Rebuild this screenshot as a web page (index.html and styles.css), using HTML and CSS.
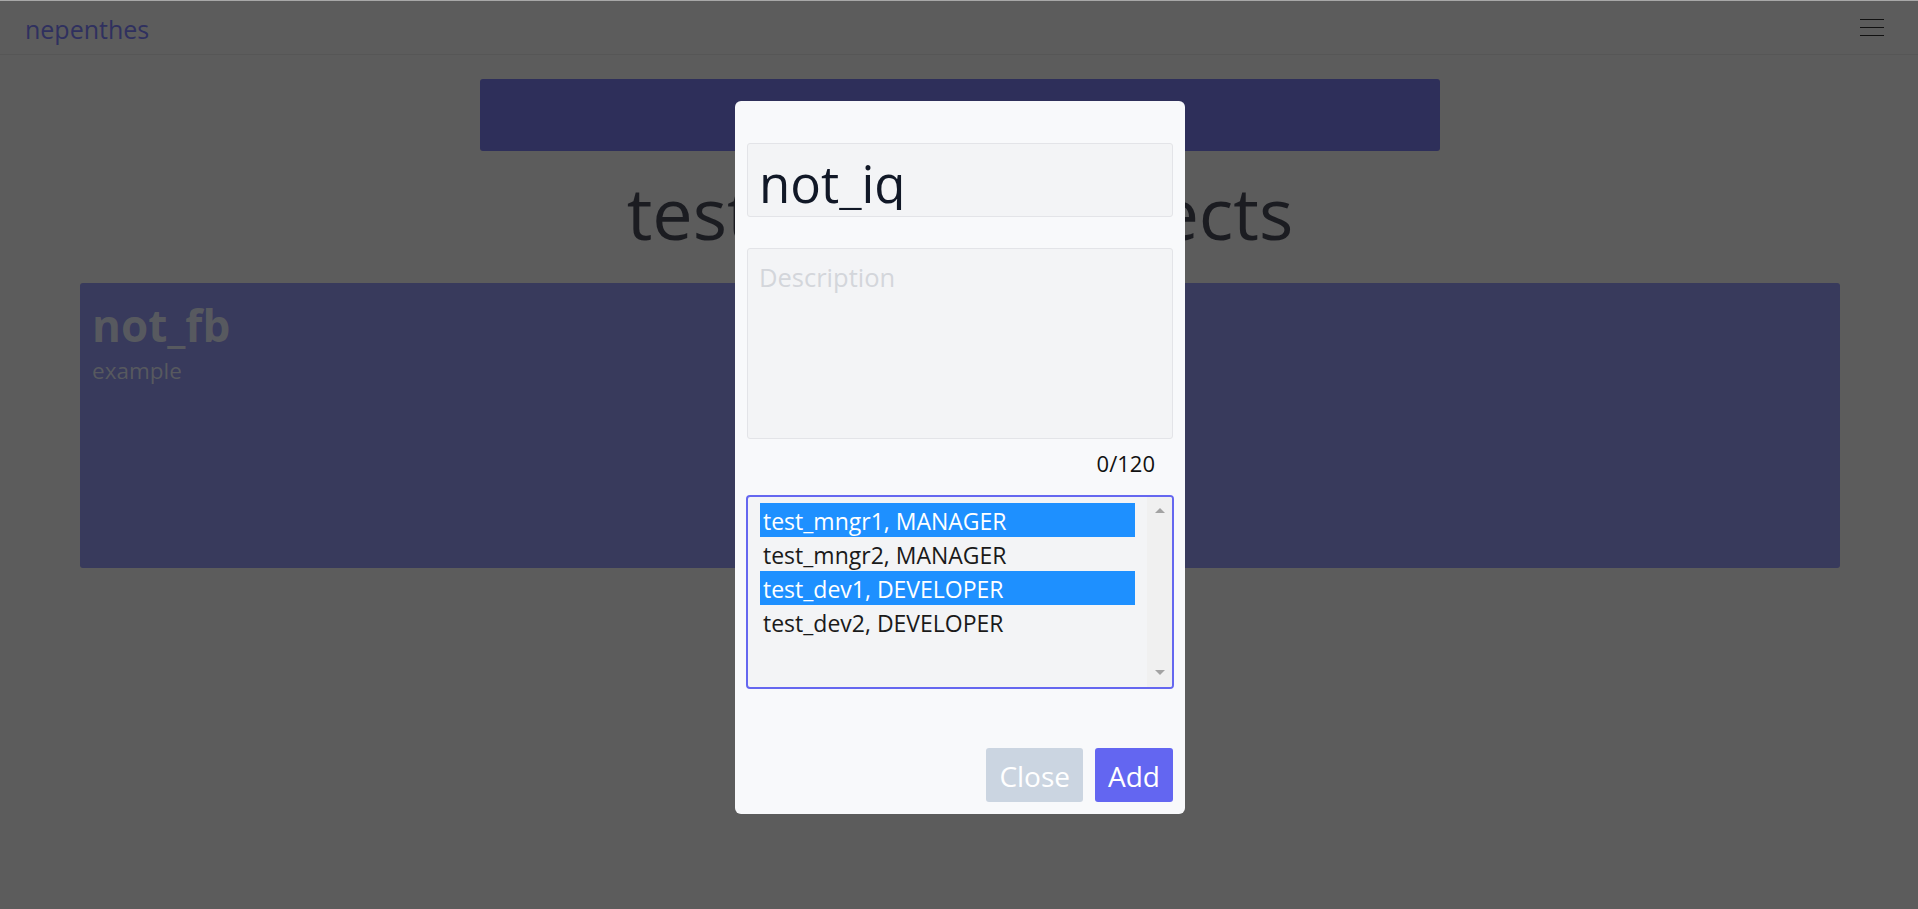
FILE: index.html
```html
<!DOCTYPE html>
<html lang="en">
<head>
<meta charset="utf-8">
<title>nepenthes</title>
<link rel="stylesheet" href="styles.css">
</head>
<body>
<header class="nav">
  <a class="brand" href="#">nepenthes</a>
  <button class="burger" aria-label="Menu">
    <svg width="24" height="18" viewBox="0 0 24 18"><path d="M0 0.5H24M0 8.5H24M0 16.5H24" stroke="#111" stroke-width="1.2" fill="none"/></svg>
  </button>
</header>
<main class="page">
  <div class="banner"></div>
  <h1 class="title">test_mngr1 projects</h1>
  <section class="card">
    <h2 class="card-name">not_fb</h2>
    <p class="card-desc">example</p>
  </section>
</main>

<div class="modal" role="dialog">
  <label class="name-field">
    <span class="name-clip"><input class="name-input" type="text" value="not_iq"></span>
  </label>
  <textarea class="desc" placeholder="Description"></textarea>
  <div class="counter">0/120</div>
  <div class="listbox" role="listbox" aria-multiselectable="true">
    <div class="options">
      <div class="option selected">test_mngr1, MANAGER</div>
      <div class="option">test_mngr2, MANAGER</div>
      <div class="option selected">test_dev1, DEVELOPER</div>
      <div class="option">test_dev2, DEVELOPER</div>
    </div>
    <div class="scrollbar">
      <span class="arrow up"></span>
      <span class="arrow down"></span>
    </div>
  </div>
  <div class="footer">
    <button class="btn btn-close">Close</button>
    <button class="btn btn-add">Add</button>
  </div>
</div>
</body>
</html>
```

FILE: styles.css
```css
* { box-sizing: border-box; }
html, body { margin: 0; padding: 0; }
body {
  background: #5c5c5c;
  font-family: "Open Sans", "Noto Sans", sans-serif;
  height: 909px;
  overflow: hidden;
  border-top: 1px solid #a8a8a8;
}
.nav {
  height: 54px;
  border-bottom: 1px solid #565656;
  display: flex;
  justify-content: space-between;
  align-items: flex-start;
  padding: 11px 34px 0 25px;
}
.brand {
  font-size: 25px;
  color: #2f305f;
  text-decoration: none;
  line-height: 34px;
}
.burger {
  background: none;
  border: 0;
  padding: 0;
  margin-top: 7px;
  display: block;
  line-height: 0;
}
.page {
  display: flex;
  flex-direction: column;
  align-items: center;
  padding: 24px 78px 0 80px;
}
.banner {
  width: 960px;
  height: 72px;
  background: #2e2f5a;
  border-radius: 3px;
}
.title {
  margin: 12px 0 22px;
  font-size: 72px;
  font-weight: 400;
  color: #1b1c21;
  line-height: normal;
}
.card {
  align-self: stretch;
  height: 285px;
  background: #383a5c;
  border-radius: 3px;
  padding: 12px 12px;
}
.card-name {
  margin: 0;
  font-size: 44px;
  font-weight: 700;
  color: #57595f;
  line-height: normal;
}
.card-desc {
  margin: 0;
  font-size: 22.5px;
  color: #57595f;
  line-height: normal;
}

.modal {
  position: absolute;
  left: 735px;
  top: 101px;
  width: 450px;
  height: 713px;
  background: #f8f9fb;
  border-radius: 6px;
  padding: 42px 12px 12px;
  display: flex;
  flex-direction: column;
}
.name-field {
  display: block;
  height: 74px;
  border: 1px solid #e3e4e8;
  border-radius: 3px;
  background: #f3f4f6;
  padding: 0 11px 6px;
}
.name-clip {
  display: block;
  height: 100%;
  overflow: hidden;
}
.name-input {
  display: block;
  width: 100%;
  height: 90px;
  border: 0;
  background: transparent;
  font-family: inherit;
  font-size: 51px;
  line-height: 56px;
  color: #111827;
  padding: 11px 0 23px;
  margin: 0;
  outline: none;
}
.desc {
  display: block;
  width: 100%;
  height: 191px;
  margin-top: 31px;
  border: 1px solid #e3e4e8;
  border-radius: 3px;
  background: #f3f4f6;
  font-family: inherit;
  font-size: 25.5px;
  line-height: normal;
  padding: 11px 11px;
  resize: none;
  outline: none;
}
.desc::placeholder { color: #d3d6db; }
.counter {
  align-self: flex-end;
  margin: 9px 18px 0 0;
  font-size: 22px;
  line-height: 30px;
  color: #111;
}
.listbox {
  margin: 17px -1px 0;
  height: 194px;
  border: 2px solid #6567f0;
  border-radius: 4px;
  background: #f3f4f6;
  display: flex;
}
.options {
  flex: 1;
  padding: 6px 12px;
}
.option {
  font-size: 23px;
  line-height: 34px;
  height: 34px;
  padding: 1px 3px 0;
  color: #1a1a1a;
  white-space: nowrap;
}
.option.selected {
  background: #1e90ff;
  color: #fff;
}
.scrollbar {
  width: 25px;
  background: #f0f0f0;
  display: flex;
  flex-direction: column;
  justify-content: space-between;
  align-items: center;
  padding: 11px 0 12px;
  border-radius: 0 2px 2px 0;
}
.arrow {
  width: 0;
  height: 0;
  border-left: 5px solid transparent;
  border-right: 5px solid transparent;
}
.arrow.up { border-bottom: 5px solid #a3a3a3; }
.arrow.down { border-top: 5px solid #a3a3a3; }
.footer {
  margin-top: auto;
  display: flex;
  justify-content: flex-end;
  gap: 12px;
}
.btn {
  height: 54px;
  border: 0;
  border-radius: 3px;
  font-family: inherit;
  font-size: 28px;
  color: #fff;
  padding: 2px 13px 0;
  line-height: normal;
}
.btn-close { background: #cbd5e1; }
.btn-add { background: #6366f1; }
```
